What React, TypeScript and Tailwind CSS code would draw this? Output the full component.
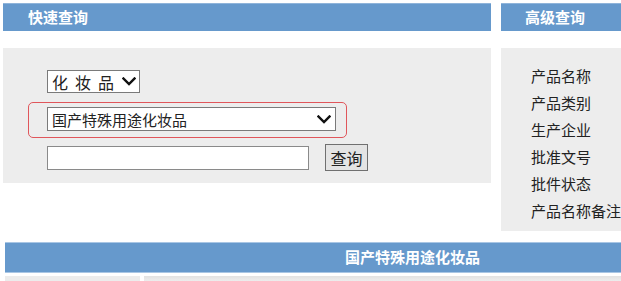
import React from 'react';

const FONT = { fontFamily: '"Noto Sans CJK SC", "Noto Sans", sans-serif' };

const Chevron = () => (
  <svg width="14" height="9" viewBox="0 0 14 9" className="shrink-0">
    <path d="M1.5 1.5 L7 7 L12.5 1.5" fill="none" stroke="#111" strokeWidth="2.4" strokeLinecap="square" />
  </svg>
);

const ADVANCED_FIELDS = ['产品名称', '产品类别', '生产企业', '批准文号', '批件状态', '产品名称备注'];

export default function App() {
  return (
    <div className="relative w-[621px] h-[281px] overflow-hidden bg-white text-[#222]" style={FONT}>
      {/* Top row */}
      <div className="flex pt-[3px]">
        {/* Quick search */}
        <div className="ml-[3px] w-[488px] shrink-0">
          <div className="h-[28px] bg-[#6699cc] border-t border-[#8fb4da] pl-[25px] text-white font-bold text-[15px] leading-[26px]">
            快速查询
          </div>
          <div className="mt-[17px] h-[135px] bg-[#ededed] pl-[44px] pt-[22px]">
            <div className="flex items-center w-[93px] h-[23px] bg-white border border-[#7a7a7a] pl-[4px] pr-[3px]">
              <span className="text-[16px] leading-none tracking-[7px] flex-1 whitespace-nowrap">化妆品</span>
              <Chevron />
            </div>
            <div className="mt-[14px] flex items-center w-[289px] h-[24px] bg-white border border-[#7a7a7a] pl-[4px] pr-[4px]">
              <span className="text-[15px] leading-none flex-1 whitespace-nowrap">国产特殊用途化妆品</span>
              <Chevron />
            </div>
            <div className="mt-[13px] flex items-center">
              <div className="w-[262px] h-[24px] bg-white border border-[#8a8a8a]" />
              <button className="ml-[16px] w-[43px] h-[27px] bg-[#e4e4e4] border border-[#707070] text-[16px] leading-none text-[#222]">
                查询
              </button>
            </div>
          </div>
        </div>

        {/* Advanced search */}
        <div className="ml-[10px] w-[140px] shrink-0">
          <div className="h-[28px] bg-[#6699cc] border-t border-[#8fb4da] pl-[24px] text-white font-bold text-[15px] leading-[26px]">
            高级查询
          </div>
          <div className="mt-[17px] h-[183px] bg-[#ededed] pl-[30px] pt-[14px]">
            {ADVANCED_FIELDS.map(f => (
              <div key={f} className="h-[27px] text-[15px] leading-[27px] whitespace-nowrap">{f}</div>
            ))}
          </div>
        </div>
      </div>

      {/* Result header */}
      <div className="ml-[5px] mt-[11px] w-[815px] h-[31px] bg-[#6699cc] border-y border-[#a9c6e4] flex items-center justify-center text-white font-bold text-[15px]">
        国产特殊用途化妆品
      </div>
      <div className="ml-[5px] mt-[3px] flex h-[10px]">
        <div className="w-[135px] bg-[#ececec]" />
        <div className="w-[4px] bg-white" />
        <div className="flex-1 bg-gradient-to-b from-[#e2e2e2] to-[#f8f8f8]" />
      </div>

      {/* Highlight annotation */}
      <div className="absolute left-[28px] top-[102px] w-[319px] h-[36px] rounded-[5px] border-[1.5px] border-[#e0565b] pointer-events-none" />
    </div>
  );
}
